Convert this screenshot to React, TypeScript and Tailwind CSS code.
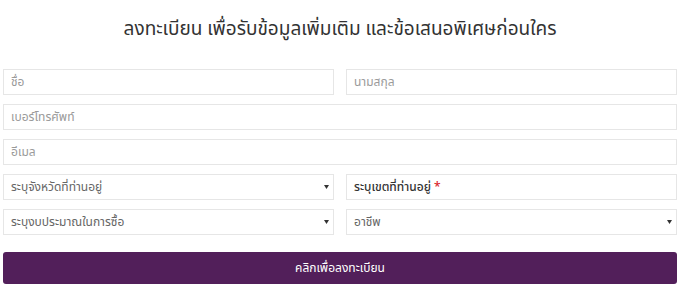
const thai = "font-['Noto_Sans_Thai','Noto_Sans','Liberation_Sans',sans-serif]";

function Field({ placeholder }: { placeholder: string }) {
    return (
        <input
            type="text"
            placeholder={placeholder}
            className="h-[26px] w-full border border-[#e6e6e6] bg-white px-[7px] text-[12px] text-[#555] placeholder:text-[#9a9a9a] outline-none"
        />
    );
}

function SelectBox({ label }: { label: string }) {
    return (
        <div className="flex h-[26px] w-full items-center justify-between border border-[#e6e6e6] bg-white pl-[7px] pr-[4px]">
            <span className="text-[12px] text-[#666]">{label}</span>
            <svg width="5" height="4" viewBox="0 0 5 4">
                <path d="M0 0H5L2.5 4Z" fill="#333" />
            </svg>
        </div>
    );
}

export default function App() {
    return (
        <div className={`${thai} h-[298px] w-[680px] bg-white px-[3px] pt-[18px]`}>
            <h1 className="text-center text-[19px] leading-[24px] text-[#333]">
                ลงทะเบียน เพื่อรับข้อมูลเพิ่มเติม และข้อเสนอพิเศษก่อนใคร
            </h1>

            <form className="mt-[27px] flex flex-col gap-[9px]">
                <div className="grid grid-cols-2 gap-[12px]">
                    <Field placeholder="ชื่อ" />
                    <Field placeholder="นามสกุล" />
                </div>
                <Field placeholder="เบอร์โทรศัพท์" />
                <Field placeholder="อีเมล" />
                <div className="grid grid-cols-2 gap-[12px]">
                    <SelectBox label="ระบุจังหวัดที่ท่านอยู่" />
                    <div className="flex h-[26px] w-full items-center border border-[#e6e6e6] bg-white px-[7px]">
                        <span className="text-[12px] font-medium text-[#333]">
                            ระบุเขตที่ท่านอยู่ <span className="text-[#d9262c]">*</span>
                        </span>
                    </div>
                </div>
                <div className="grid grid-cols-2 gap-[12px]">
                    <SelectBox label="ระบุงบประมาณในการซื้อ" />
                    <SelectBox label="อาชีพ" />
                </div>
                <button
                    type="button"
                    className="mt-[8px] h-[32px] w-full rounded-[3px] bg-[#521f5a] text-[12px] text-white"
                >
                    คลิกเพื่อลงทะเบียน
                </button>
            </form>
        </div>
    );
}
